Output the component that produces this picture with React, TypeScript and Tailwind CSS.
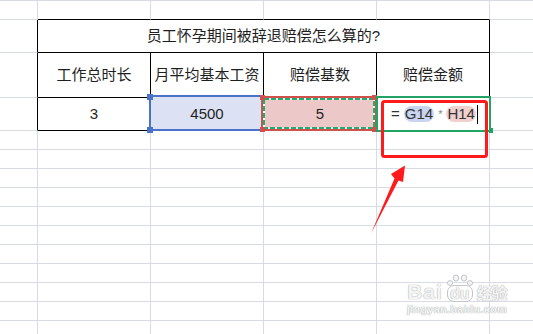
import React from "react";

const GRID = "border-[#d6dbe6]";

function Handle({ className }: { className: string }) {
  return <span className={`absolute block ${className}`} />;
}

function EmptyRow() {
  return (
    <>
      <div className={`border-r border-b ${GRID}`} />
      <div className={`border-r border-b ${GRID}`} />
      <div className={`border-r border-b ${GRID}`} />
      <div className={`border-r border-b ${GRID}`} />
      <div className={`border-r border-b ${GRID}`} />
      <div className={`border-b ${GRID}`} />
    </>
  );
}

function Watermark() {
  return (
    <div className="absolute left-[407px] top-[274px] flex flex-col items-center font-['Liberation_Sans','Noto_Sans_CJK_SC',sans-serif] font-bold text-[#f3f3f3] [text-shadow:0_0_1px_#aeb0b4,0_0_1px_#aeb0b4]">
      <div className="flex items-end leading-none">
        <span className="text-[21px] tracking-[1px]">Bai</span>
        <span className="relative mx-[2px] flex flex-col items-center">
          <svg width="30" height="12" viewBox="0 0 30 12" className="mb-[-1px]">
            <g fill="#f5f5f5" stroke="#c3c5c9" strokeWidth="1">
              <ellipse cx="5" cy="9" rx="2.6" ry="2.4" />
              <ellipse cx="11" cy="4" rx="2.8" ry="3" />
              <ellipse cx="19" cy="4" rx="2.8" ry="3" />
              <ellipse cx="25" cy="9" rx="2.6" ry="2.4" />
            </g>
          </svg>
          <span className="rounded-[7px] border border-[#c3c5c9] px-[2px] text-[16px] leading-[15px]">du</span>
        </span>
        <span className="text-[16px] tracking-[-1px]">经验</span>
      </div>
      <span className="mt-[2px] text-[11px] leading-none tracking-[0.2px]">jingyan.baidu.com</span>
    </div>
  );
}

export default function App() {
  return (
    <div className="relative h-[334px] w-[533px] overflow-hidden bg-white font-['Liberation_Sans','Noto_Sans_CJK_SC',sans-serif] text-[15px] text-[#1f1f1f]">
      <div className={`grid grid-cols-[38px_113px_113px_113px_113px_1fr] grid-rows-[19px_33px_45px_33px_repeat(11,19px)] border-t ${GRID}`}>
        {/* row 1 */}
        <div className={`border-r border-b ${GRID}`} />
        <div className="border-r border-b border-r-[#d6dbe6] border-b-black" />
        <div className="border-r border-b border-r-[#d6dbe6] border-b-black" />
        <div className="border-r border-b border-r-[#d6dbe6] border-b-black" />
        <div className="border-r border-b border-r-[#d6dbe6] border-b-black" />
        <div className={`border-b ${GRID}`} />

        {/* title */}
        <div className="border-r border-b border-r-black border-b-[#d6dbe6]" />
        <div className="col-span-4 flex items-center justify-center border-r border-b border-black">
          员工怀孕期间被辞退赔偿怎么算的?
        </div>
        <div className={`border-b ${GRID}`} />

        {/* headers */}
        <div className="border-r border-b border-r-black border-b-[#d6dbe6]" />
        <div className="flex items-center justify-center border-r border-b border-black">工作总时长</div>
        <div className="flex items-center justify-center border-r border-b border-black">月平均基本工资</div>
        <div className="flex items-center justify-center border-r border-b border-black">赔偿基数</div>
        <div className="flex items-center justify-center border-r border-b border-black">赔偿金额</div>
        <div className={`border-b ${GRID}`} />

        {/* data */}
        <div className="border-r border-b border-r-black border-b-[#d6dbe6]" />
        <div className="flex items-center justify-center border-r border-b border-black">3</div>
        <div className="relative flex items-center justify-center border-r border-b border-black">
          <div className="absolute left-[-2px] top-[-3px] h-[36px] w-[115px] border-2 border-[#4a72c8] bg-[#dce2f4]" />
          <Handle className="left-[-4px] top-[-4px] h-[6px] w-[6px] bg-[#4a72c8]" />
          <Handle className="left-[-4px] top-[29px] h-[6px] w-[6px] bg-[#4a72c8]" />
          <span className="relative">4500</span>
        </div>
        <div className="relative flex items-center justify-center border-r border-b border-black">
          <div className="absolute left-[-3px] top-[-2px] h-[35px] w-[116px] border-2 border-[#d2504b] bg-[#ecc9c8]">
            <svg className="absolute inset-0" width="112" height="31">
              <rect x="1" y="1" width="110" height="29" fill="none" stroke="#ffffff" strokeWidth="2" />
              <rect x="1" y="1" width="110" height="29" fill="none" stroke="#1fae6c" strokeWidth="2" strokeDasharray="5 2" />
            </svg>
          </div>
          <Handle className="left-[-4px] top-[-3px] h-[5px] w-[5px] bg-[#d2504b]" />
          <Handle className="left-[108px] top-[-3px] h-[5px] w-[5px] bg-[#d2504b]" />
          <Handle className="left-[-4px] top-[29px] h-[5px] w-[5px] bg-[#d2504b]" />
          <Handle className="left-[108px] top-[29px] h-[5px] w-[5px] bg-[#d2504b]" />
          <span className="relative">5</span>
        </div>
        <div className="relative flex items-center justify-center border-r border-b border-black">
          <div className="absolute left-[-1px] top-[-2px] h-[36px] w-[115px] border-2 border-[#21a366]" />
          <Handle className="left-[112px] top-[30px] h-[5px] w-[4px] bg-[#21a366]" />
          <span className="relative ml-[3px] flex items-center gap-[3px] text-[#333]">
            <span className="mr-[1px]">=</span>
            <span className="rounded-full bg-[#c9d4f0] px-[1px] leading-[16px]">G14</span>
            <span className="px-[1px] text-[11px] text-[#888]">*</span>
            <span className="rounded-full bg-[#f0d0cf] px-[1px] leading-[16px]">H14</span>
            <span className="ml-[-2px] h-[19px] w-px bg-black" />
          </span>
        </div>
        <div className={`border-b ${GRID}`} />

        {Array.from({ length: 11 }).map((_, i) => (
          <EmptyRow key={i} />
        ))}
      </div>

      {/* annotation */}
      <svg className="absolute left-0 top-0" width="533" height="334">
        <rect x="382.5" y="101.5" width="104" height="55" rx="2" fill="none" stroke="#ff1b1b" strokeWidth="3" />
        <polygon points="405,165.5 403,182 398.5,180.5 371,233.5 394.5,178.5 391,174" fill="#ff1b1b" />
      </svg>

      <Watermark />
    </div>
  );
}
